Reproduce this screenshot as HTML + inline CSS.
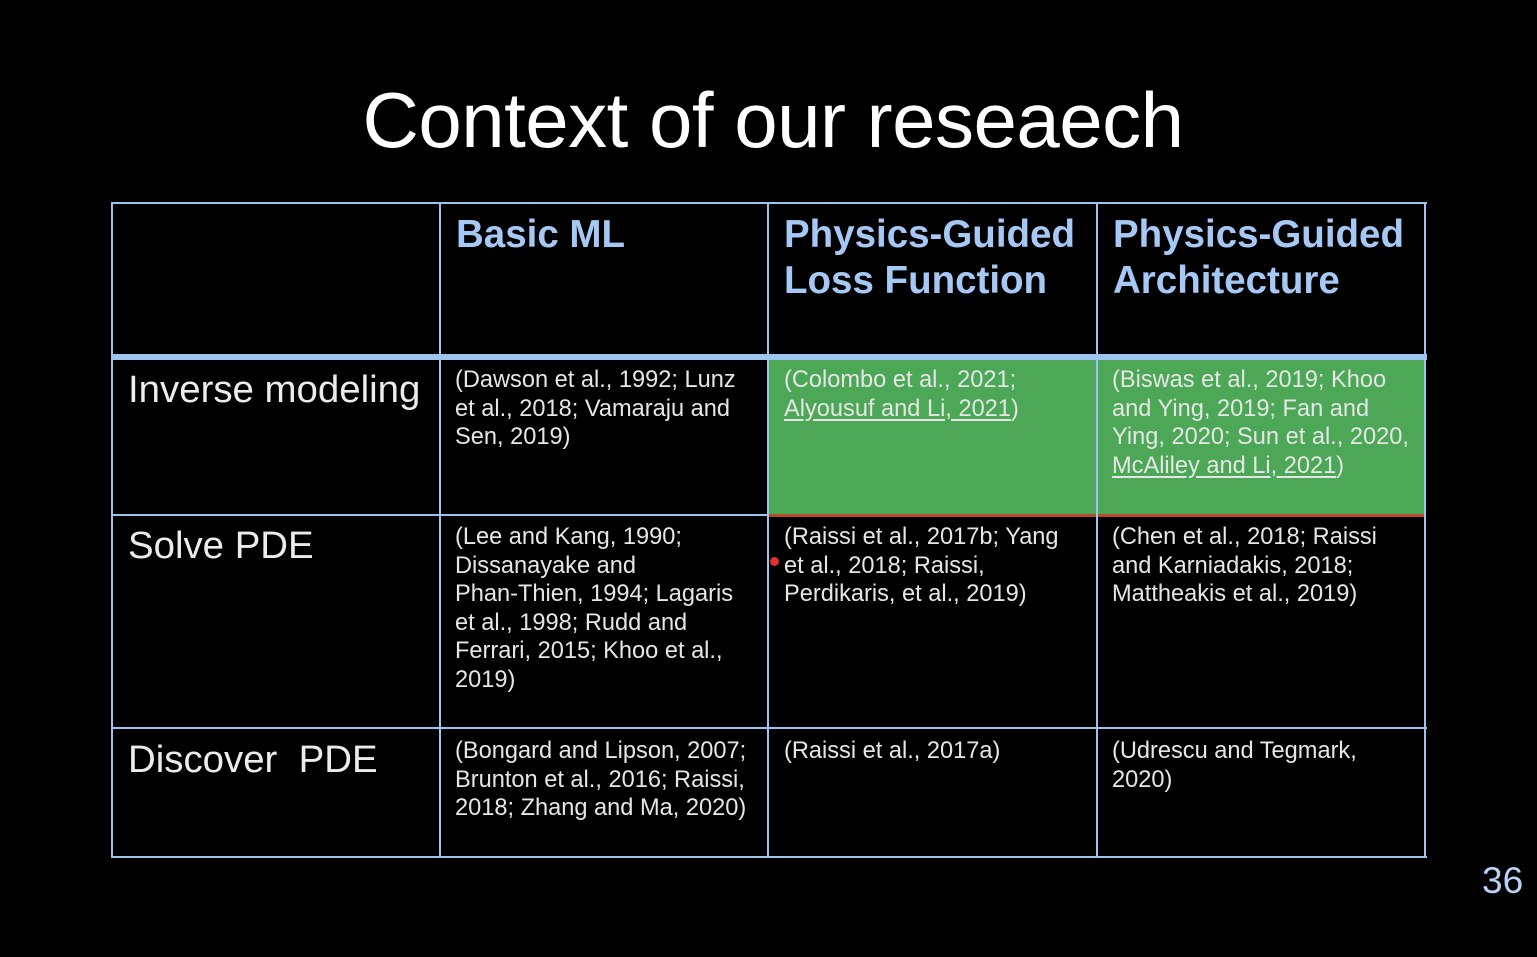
<!DOCTYPE html>
<html><head><meta charset="utf-8"><style>
*{margin:0;padding:0;box-sizing:border-box}
body{width:1537px;height:957px;background:#000;position:relative;overflow:hidden;font-family:"Liberation Sans",Arial,sans-serif}
.t{position:absolute;left:0;width:1546px;text-align:center;top:75px;font-size:78px;color:#fff;letter-spacing:-0.5px}
.l{position:absolute;background:#9dc3ef}
.g{position:absolute;background:#4ca757;left:769px;top:360px;width:656px;height:155px}
.h{position:absolute;color:#a6c8f5;font-weight:bold;font-size:38.5px;line-height:46px}
.c{position:absolute;color:#e6e6e6;font-size:23.6px;line-height:28.5px}
.r{position:absolute;color:#ececec;font-size:38.4px;left:128px}
u{text-decoration:underline;text-underline-offset:3px}
</style></head><body>
<div class="t">Context of our reseaech</div>
<div class="g"></div>
<div style="position:absolute;left:769px;top:514px;width:656px;height:3px;background:#b84a2a"></div>
<div class="l" style="left:111px;top:202px;width:1316px;height:2px"></div>
<div class="l" style="left:111px;top:354px;width:1316px;height:6px"></div>
<div class="l" style="left:111px;top:514px;width:658px;height:2px"></div>
<div class="l" style="left:111px;top:727px;width:1316px;height:2px"></div>
<div class="l" style="left:111px;top:856px;width:1316px;height:2px"></div>
<div class="l" style="left:111px;top:202px;width:2px;height:656px"></div>
<div class="l" style="left:439px;top:202px;width:2px;height:656px"></div>
<div class="l" style="left:767px;top:202px;width:2px;height:656px"></div>
<div class="l" style="left:1096px;top:202px;width:2px;height:656px"></div>
<div class="l" style="left:1424px;top:202px;width:2px;height:656px"></div>

<div class="h" style="left:456px;top:212px">Basic ML</div>
<div class="h" style="left:784px;top:212px">Physics-Guided<br>Loss Function</div>
<div class="h" style="left:1113px;top:212px">Physics-Guided<br>Architecture</div>

<div class="r" style="top:368px">Inverse modeling</div>
<div class="r" style="top:524px">Solve PDE</div>
<div class="r" style="top:738px">Discover&nbsp; PDE</div>

<div class="c" style="left:455px;top:366px">(Dawson et al., 1992; Lunz<br>et al., 2018; Vamaraju and<br>Sen, 2019)</div>
<div class="c" style="left:784px;top:366px">(Colombo et al., 2021;<br><u>Alyousuf and Li, 2021</u>)</div>
<div class="c" style="left:1112px;top:366px">(Biswas et al., 2019; Khoo<br>and Ying, 2019; Fan and<br>Ying, 2020; Sun et al., 2020,<br><u>McAliley and Li, 2021</u>)</div>

<div class="c" style="left:455px;top:523px">(Lee and Kang, 1990;<br>Dissanayake and<br>Phan-Thien, 1994; Lagaris<br>et al., 1998; Rudd and<br>Ferrari, 2015; Khoo et al.,<br>2019)</div>
<div class="c" style="left:784px;top:523px">(Raissi et al., 2017b; Yang<br>et al., 2018; Raissi,<br>Perdikaris, et al., 2019)</div>
<div class="c" style="left:1112px;top:523px">(Chen et al., 2018; Raissi<br>and Karniadakis, 2018;<br>Mattheakis et al., 2019)</div>

<div class="c" style="left:455px;top:737px">(Bongard and Lipson, 2007;<br>Brunton et al., 2016; Raissi,<br>2018; Zhang and Ma, 2020)</div>
<div class="c" style="left:784px;top:737px">(Raissi et al., 2017a)</div>
<div class="c" style="left:1112px;top:737px">(Udrescu and Tegmark,<br>2020)</div>

<div style="position:absolute;left:770px;top:557px;width:9px;height:9px;border-radius:50%;background:#e03030"></div>
<div style="position:absolute;left:1482px;top:860px;font-size:37px;color:#b8d2f5">36</div>
</body></html>
